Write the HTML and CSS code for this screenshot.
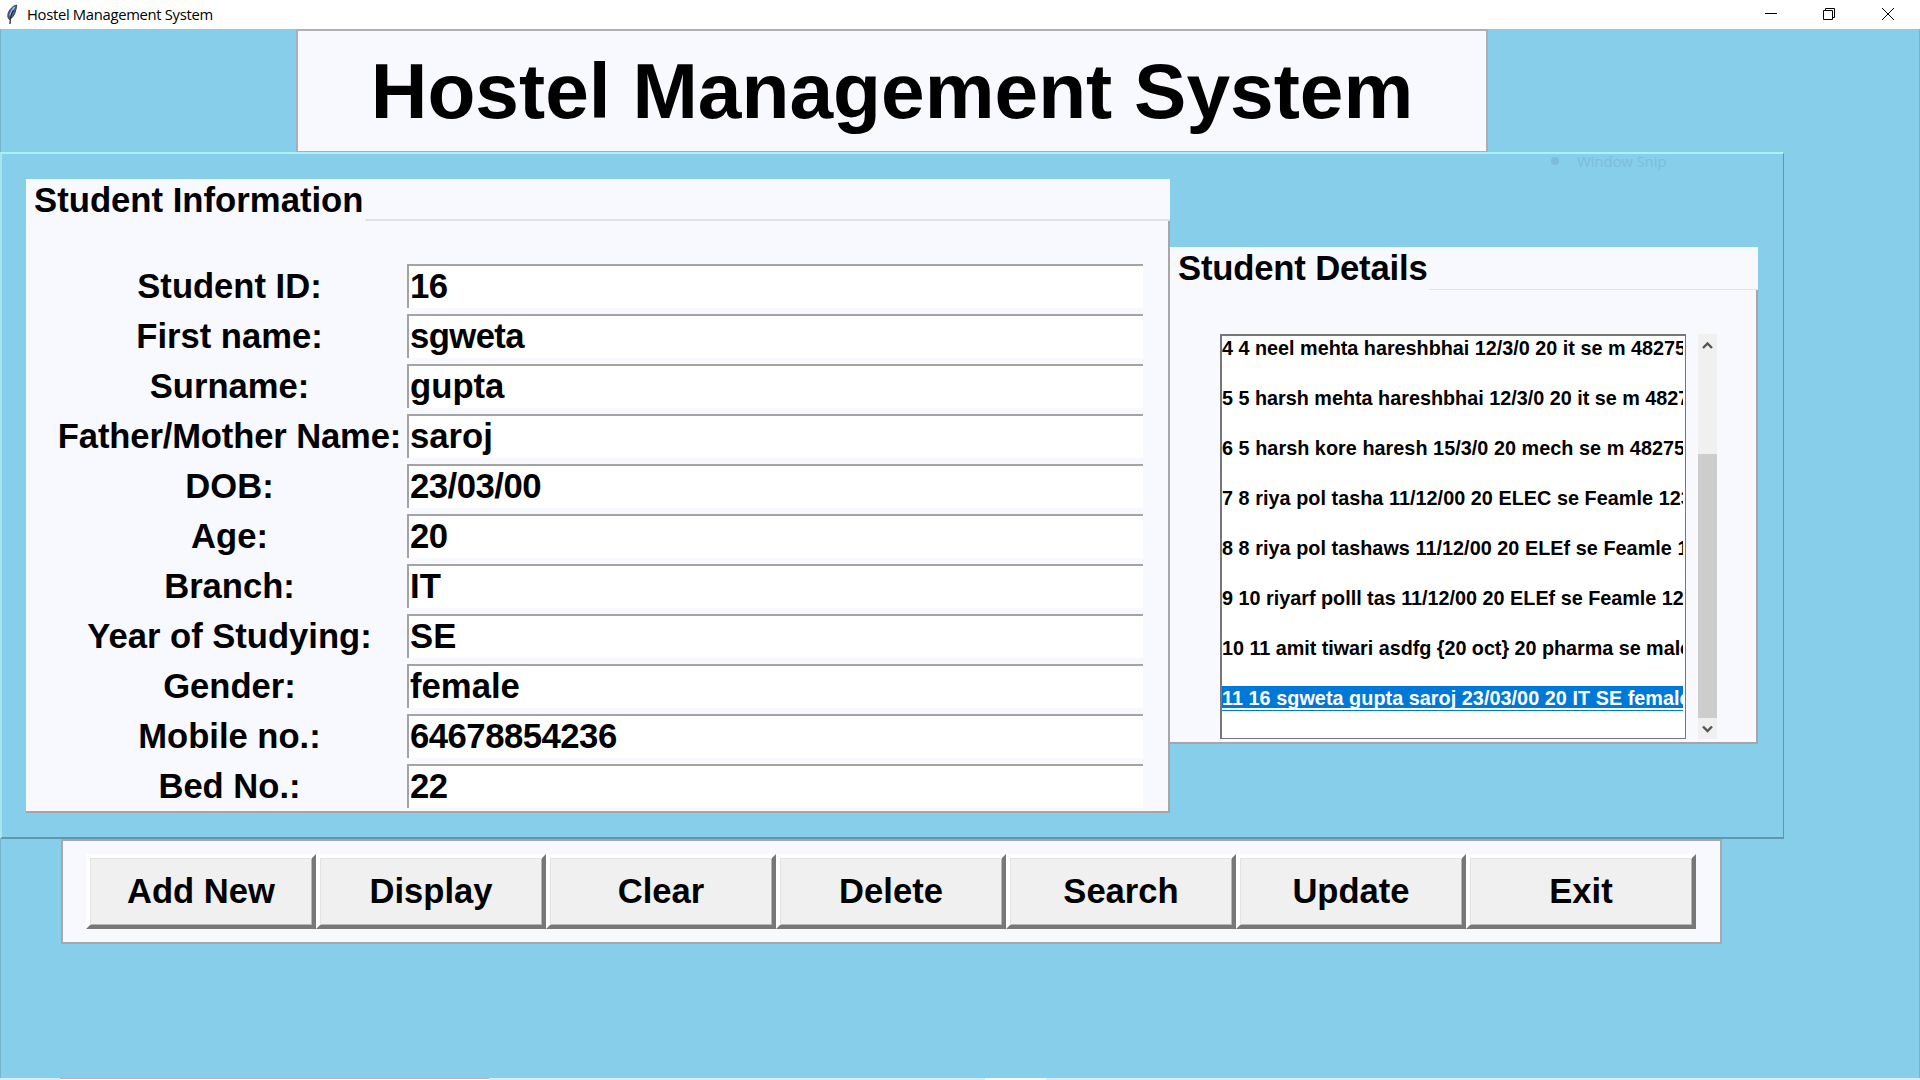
FILE: index.html
```html
<!DOCTYPE html>
<html lang="en">
<head>
<meta charset="utf-8">
<title>Hostel Management System</title>
<link rel="stylesheet" href="styles.css">
</head>
<body>
<div class="window">
  <header class="titlebar">
    <svg class="feather" viewBox="0 0 14 22" width="14" height="22">
      <path d="M11.500 2C8 3 4 6.500 3 11c-.4 2.500 0 4.500 1.300 5.500C7.500 15 9.500 12 10.500 8 11 5.500 12 4 11.500 2z" fill="#3f69a8" stroke="#3a3a40" stroke-width="1"/>
      <path d="M9.500 4C7.500 6 6 9 4.800 12.500" fill="none" stroke="#a9c4e8" stroke-width="1.400"/>
      <path d="M8.500 7C6.500 10 5.200 14 5 21" fill="none" stroke="#2b2b2b" stroke-width="1.300"/>
    </svg>
    <span class="caption">Hostel Management System</span>
    <svg class="controls" viewBox="0 0 140 29" width="140" height="29" fill="none" stroke="#000" stroke-width="1">
      <path d="M5 13.500h12"/>
      <path d="M63.500 10.500h9v9h-9zM65.500 10.500v-2h9v9h-2"/>
      <path d="M122 8l12 12M134 8l-12 12"/>
    </svg>
  </header>
  <main class="desk">
    <h1 class="banner">Hostel Management System</h1>
    <section class="workspace">
      <div class="menu-ghost"><i></i>Window Snip</div>
      <section class="group info">
        <h2 class="legend">Student Information</h2>
        <form class="fields">
          <label>Student ID:</label><div class="entry numeric">16</div>
          <label>First name:</label><div class="entry tight">sgweta</div>
          <label>Surname:</label><div class="entry">gupta</div>
          <label class="long">Father/Mother Name:</label><div class="entry">saroj</div>
          <label>DOB:</label><div class="entry numeric">23/03/00</div>
          <label>Age:</label><div class="entry numeric">20</div>
          <label>Branch:</label><div class="entry">IT</div>
          <label>Year of Studying:</label><div class="entry">SE</div>
          <label>Gender:</label><div class="entry">female</div>
          <label>Mobile no.:</label><div class="entry numeric">64678854236</div>
          <label>Bed No.:</label><div class="entry numeric">22</div>
        </form>
      </section>
      <section class="group details">
        <h2 class="legend">Student Details</h2>
        <div class="list-area">
          <ul class="listbox">
            <li>4 4 neel mehta hareshbhai 12/3/0 20 it se m 48275</li>
            <li>5 5 harsh mehta hareshbhai 12/3/0 20 it se m 4827</li>
            <li class="wide">6 5 harsh kore haresh 15/3/0 20 mech se m 48275</li>
            <li class="wide">7 8 riya pol tasha 11/12/00 20 ELEC se Feamle 123</li>
            <li class="wide">8 8 riya pol tashaws 11/12/00 20 ELEf se Feamle 1</li>
            <li>9 10 riyarf polll tas 11/12/00 20 ELEf se Feamle 12</li>
            <li class="narrow">10 11 amit tiwari asdfg {20 oct} 20 pharma se male</li>
            <li class="selected wide">11 16 sgweta gupta saroj 23/03/00 20 IT SE female</li>
          </ul>
          <div class="scrollbar">
            <svg viewBox="0 0 19 20" width="19" height="20"><path d="M5 14L9.500 9.500 14 14" fill="none" stroke="#555" stroke-width="2.400"/></svg>
            <div class="track"><div class="thumb"></div></div>
            <svg viewBox="0 0 19 21" width="19" height="21"><path d="M5 8.500L9.500 13 14 8.500" fill="none" stroke="#555" stroke-width="2.400"/></svg>
          </div>
        </div>
      </section>
    </section>
    <nav class="toolbar">
      <button>Add New</button><button>Display</button><button>Clear</button><button>Delete</button><button>Search</button><button>Update</button><button>Exit</button>
    </nav>
  </main>
  <footer class="edge"><span class="edge-field"></span><span class="edge-item"></span></footer>
</div>
</body>
</html>
```
FILE: styles.css
```css
* { box-sizing: border-box; }
body { margin: 0; overflow: hidden; font-family: "Liberation Sans", Arial, sans-serif; color: #000; }
.window { width: 1920px; height: 1080px; display: flex; flex-direction: column; }
.titlebar { height: 29px; flex: none; display: flex; align-items: center; background: #fff; padding-left: 5px; }
.feather { margin: -2px 8px 0 0; }
.caption { flex: 1; font: 14.8px/29px "Open Sans", "Noto Sans", sans-serif; letter-spacing: -0.31px; }
.controls { margin-right: 20px; }
.desk { flex: 1; min-height: 0; background: #87ceeb; border-left: 1px solid #79b4cd; border-right: 1px solid #79b4cd; display: flex; flex-direction: column; }
.banner { margin: 0 0 0 295px; width: 1192px; height: 124px; flex: none; background: #f8f8ff; border: 2px solid #aeaeb4; text-align: center; font-size: 78.5px; line-height: 121px; font-weight: bold; white-space: nowrap; }
.workspace { position: relative; width: 1784px; height: 687px; flex: none; margin: -1px 0 0 -1px; border: 2px solid #a8e6ee; border-top-color: #a9f3ff; border-right-color: #6296ad; border-bottom-color: #6296ad; border-right-width: 1px; display: flex; align-items: flex-start; padding: 25px 0 0 24px; }
.menu-ghost { position: absolute; left: 1542px; top: -3px; height: 20px; display: flex; align-items: center; font: 15px "Open Sans", sans-serif; letter-spacing: -0.15px; color: #7cbddb; }
.menu-ghost i { width: 8px; height: 8px; border-radius: 50%; background: #7cbddb; margin: 0 18px 0 7px; }
.group { flex: none; background: #f8f8ff; border: solid #a5a5aa; border-width: 0 2px 2px 0; }
.info { width: 1144px; height: 634px; }
.details { width: 588px; height: 497px; margin-top: 68px; }
.legend { margin: 0 -2px 0 0; height: 42px; background: linear-gradient(#e1e1e6, #e1e1e6) right bottom / 805px 2px no-repeat #f8f8ff; font-size: 34.7px; line-height: 42px; font-weight: bold; white-space: nowrap; padding-left: 8px; }
.details .legend { height: 43px; background-size: 329px 1px; letter-spacing: -0.2px; }
.fields { display: grid; grid-template-columns: 359px 736px; grid-auto-rows: 50px; padding: 43px 0 0 22px; }
.fields label { text-align: center; padding-left: 4px; font-size: 34.6px; font-weight: bold; line-height: 45px; white-space: nowrap; }
.fields .long { letter-spacing: -0.13px; }
.entry { height: 44px; background: #fff; border-top: 2px solid #a3a3a3; border-left: 2px solid #a3a3a3; font-size: 34.7px; line-height: 41px; font-weight: bold; padding-left: 1px; }
.entry.numeric { letter-spacing: -0.5px; }
.entry.tight { letter-spacing: -0.6px; }
.list-area { display: flex; gap: 12px; padding: 44px 0 0 50px; }
.listbox { margin: 0; padding: 0; list-style: none; width: 466px; height: 405px; background: #fff; border: 2px solid #777; border-bottom-width: 1px; border-right-width: 1px; overflow: hidden; font-size: 19.8px; font-weight: bold; }
.listbox li { height: 25px; line-height: 25px; margin: 0 2px 25px 0; letter-spacing: 0; white-space: nowrap; overflow: hidden; }
.listbox .wide { letter-spacing: 0.05px; }
.listbox .narrow { letter-spacing: -0.03px; }
.listbox .selected { color: #fff; background: linear-gradient(#0078d7 22px, #fff 22px, #fff 24px, #0078d7 24px); }
.scrollbar { width: 19px; height: 405px; background: #f0f0f0; display: flex; flex-direction: column; }
.scrollbar svg { flex: none; }
.track { flex: 1; display: flex; flex-direction: column; justify-content: flex-end; }
.thumb { height: 264px; background: #cdcdcd; }
.toolbar { margin-left: 60px; width: 1661px; height: 105px; flex: none; background: #f8f8ff; border: 2px solid #a7a7ad; display: flex; padding: 13px 23px; }
.toolbar button { flex: none; width: 230px; height: 75px; background: #f0f0f0; border: 4px solid; border-color: #fff #777 #777 #fff; box-shadow: inset 1px 1px #e3e3e3, inset -1px -1px #b5b5b5; font: bold 34.6px "Liberation Sans", sans-serif; color: #000; padding: 0 0 1px; }
.edge { height: 2px; flex: none; background: #d9edf0; display: flex; }
.edge-field { margin-left: 60px; width: 429px; background: #fff; border-top: 1px solid #b7b7b7; }
.edge-item { margin-left: 496px; width: 61px; background: #f4fafb; }
```
